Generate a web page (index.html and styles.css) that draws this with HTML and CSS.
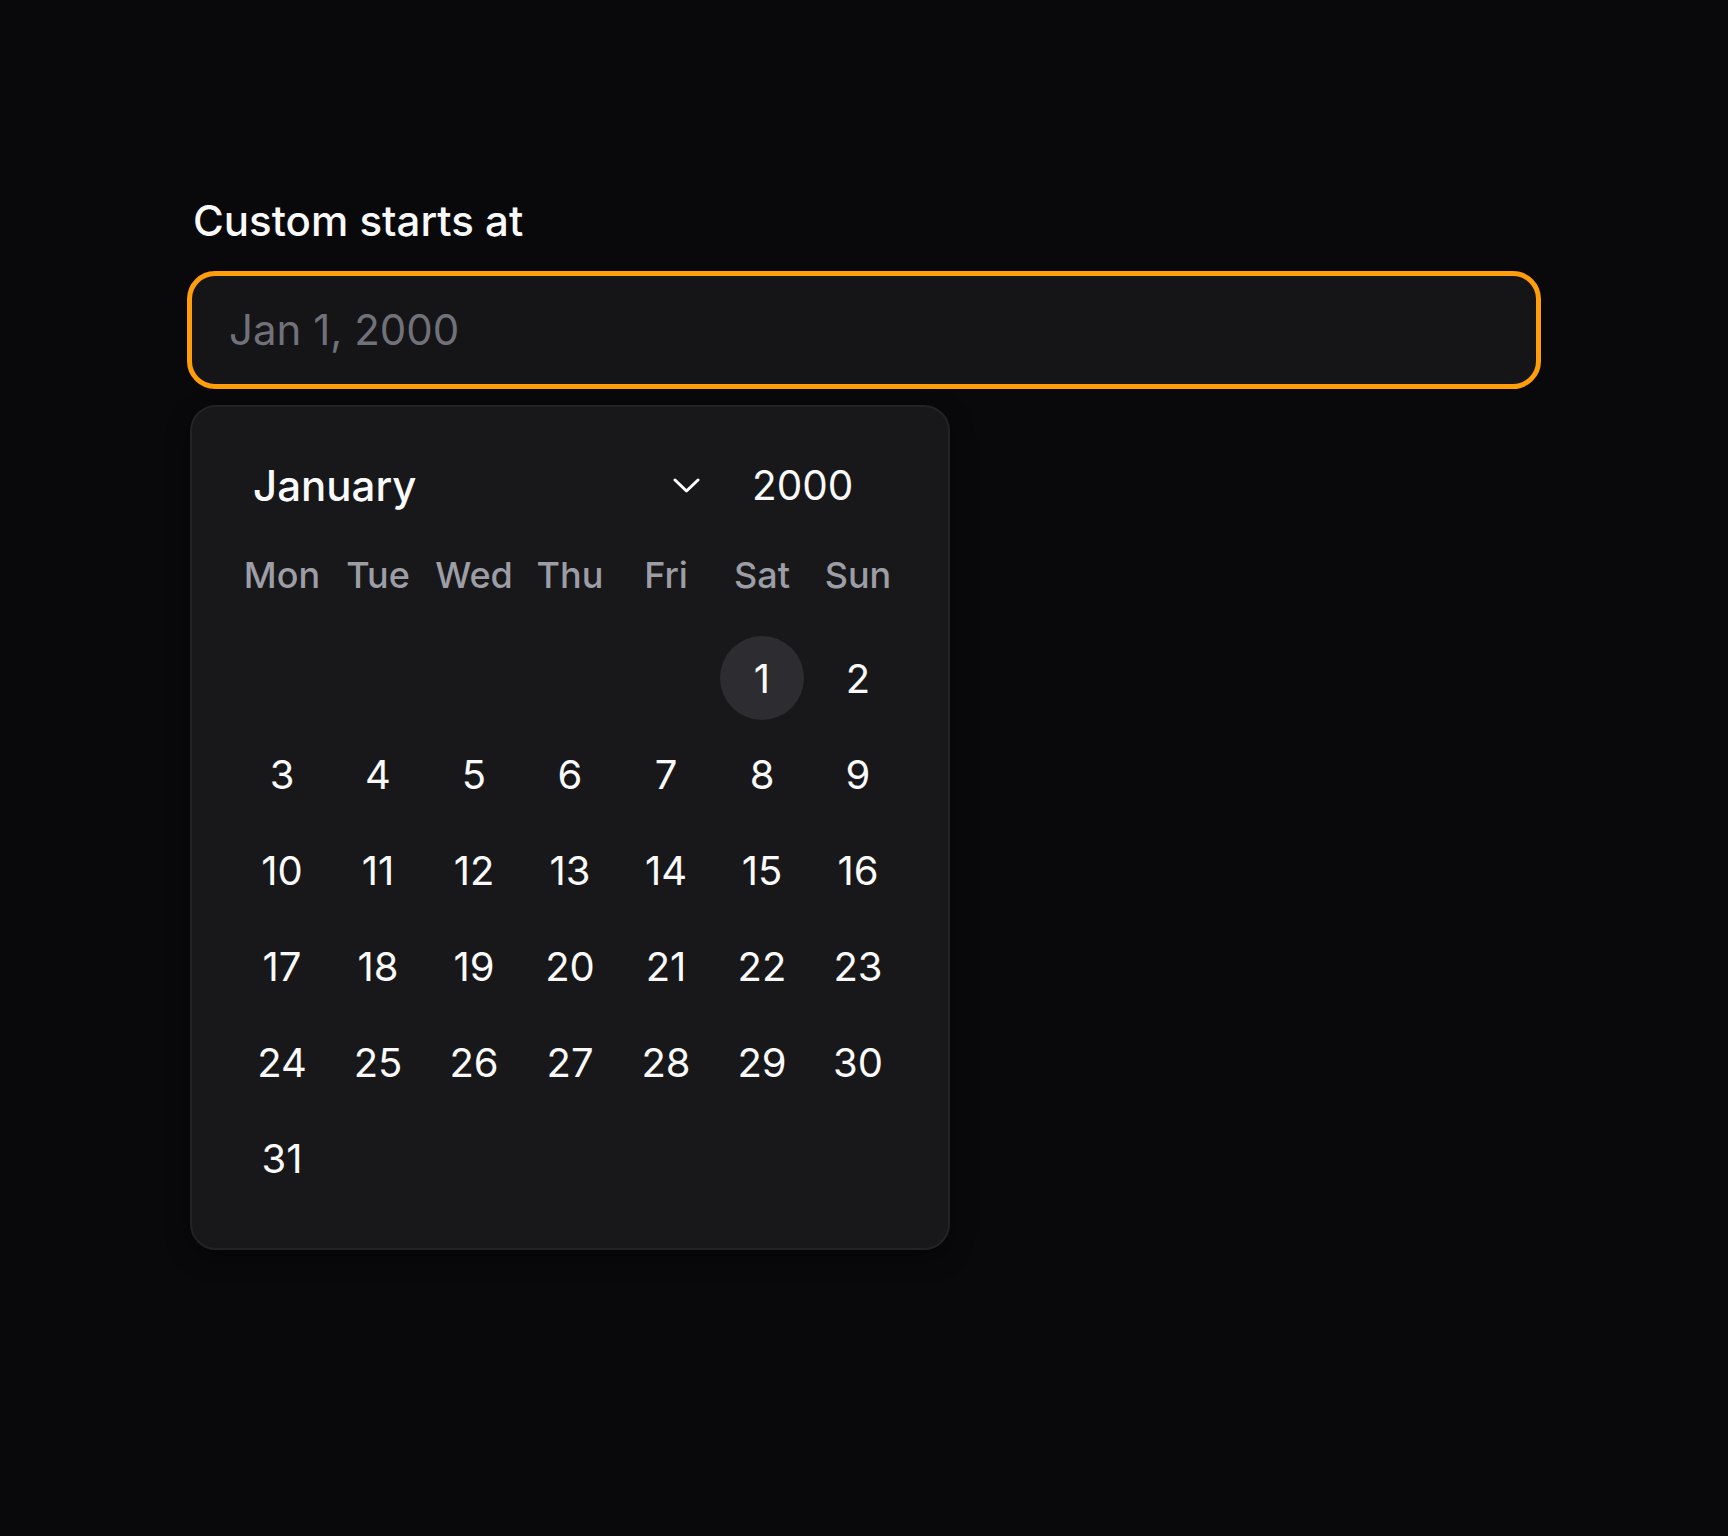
FILE: index.html
```html
<!DOCTYPE html>
<html lang="en">
<head>
<meta charset="utf-8">
<title>Custom starts at</title>
<link rel="stylesheet" href="styles.css">
</head>
<body>
<main class="page">
  <div class="field">
    <label class="label" for="start">Custom starts at</label>
    <div class="input">
      <span class="placeholder">Jan 1, 2000</span>
    </div>
    <div class="popover">
      <div class="cal-head">
        <div class="month-select">
          <span class="month">January</span>
          <svg class="chevron" width="27" height="16" viewBox="0 0 27 16" aria-hidden="true">
            <polyline points="2,2 13.5,13 25,2" fill="none" stroke="#ffffff" stroke-width="3" stroke-linecap="round" stroke-linejoin="round"/>
          </svg>
        </div>
        <div class="year-select">2000</div>
      </div>
      <div class="weekdays">
        <span>Mon</span><span>Tue</span><span>Wed</span><span>Thu</span><span>Fri</span><span>Sat</span><span>Sun</span>
      </div>
      <div class="days">
        <span class="day empty"></span><span class="day empty"></span><span class="day empty"></span><span class="day empty"></span><span class="day empty"></span>
        <span class="day selected">1</span><span class="day">2</span>
        <span class="day">3</span><span class="day">4</span><span class="day">5</span><span class="day">6</span><span class="day">7</span><span class="day">8</span><span class="day">9</span>
        <span class="day">10</span><span class="day">11</span><span class="day">12</span><span class="day">13</span><span class="day">14</span><span class="day">15</span><span class="day">16</span>
        <span class="day">17</span><span class="day">18</span><span class="day">19</span><span class="day">20</span><span class="day">21</span><span class="day">22</span><span class="day">23</span>
        <span class="day">24</span><span class="day">25</span><span class="day">26</span><span class="day">27</span><span class="day">28</span><span class="day">29</span><span class="day">30</span>
        <span class="day">31</span>
      </div>
    </div>
  </div>
</main>
</body>
</html>
```

FILE: styles.css
```css
* { box-sizing: border-box; }

html, body {
  margin: 0;
  padding: 0;
  background: #09090b;
  color: #fafafa;
  font-family: Inter, "Noto Sans", sans-serif;
}

body { min-height: 1536px; }

.page {
  padding-top: 197px;
  padding-left: 187px;
}

.field {
  width: 1354px;
  display: flex;
  flex-direction: column;
}

.label {
  display: block;
  margin-left: 6px;
  font-size: 42px;
  line-height: 48px;
  font-weight: 500;
  color: #fafafa;
  margin-bottom: 26px;
}

.input {
  height: 118px;
  border: 5px solid #ff9d0a;
  border-radius: 28px;
  background: #151518;
  display: flex;
  align-items: center;
  padding-left: 37px;
}

.placeholder {
  font-size: 42px;
  color: #71717a;
  line-height: 1;
}

.popover {
  margin-top: 16px;
  margin-left: 3px;
  width: 760px;
  height: 845px;
  background: #18181b;
  border: 2px solid #232327;
  border-radius: 26px;
  padding: 42px 42px;
  box-shadow: 0 8px 24px rgba(0,0,0,0.4);
}

.cal-head {
  height: 74px;
  display: flex;
  align-items: center;
  margin-bottom: 20px;
}

.month-select {
  width: 500px;
  display: flex;
  align-items: center;
  justify-content: space-between;
  padding-left: 19px;
  padding-right: 34px;
}

.month {
  font-size: 42px;
  font-weight: 500;
  line-height: 1;
}

.chevron { display: block; }

.year-select {
  padding-left: 18px;
  font-size: 40.5px;
  font-weight: 400;
  line-height: 1;
}

.weekdays {
  display: grid;
  grid-template-columns: repeat(7, 96px);
  height: 64px;
  align-items: center;
  margin-bottom: 23px;
}

.weekdays span {
  text-align: center;
  font-size: 36px;
  font-weight: 500;
  color: #9d9da6;
}

.days {
  display: grid;
  grid-template-columns: repeat(7, 96px);
  grid-auto-rows: 96px;
}

.day {
  display: flex;
  align-items: center;
  justify-content: center;
  font-size: 40px;
  color: #fafafa;
}

.day.selected {
  position: relative;
  z-index: 0;
}

.day.selected::after {
  content: "";
  position: absolute;
  left: 6px;
  top: 6px;
  width: 84px;
  height: 84px;
  border-radius: 50%;
  background: #2d2d31;
  z-index: -1;
}
```
